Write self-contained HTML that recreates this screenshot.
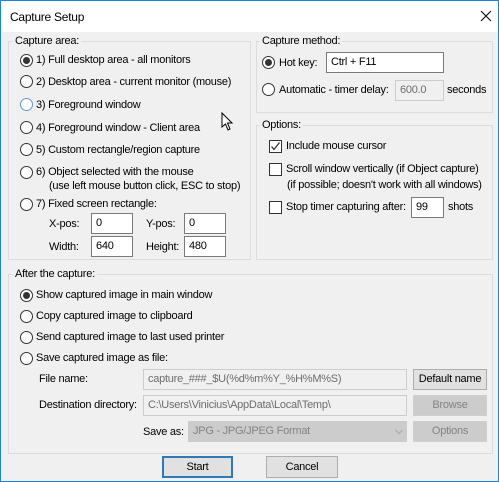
<!DOCTYPE html>
<html><head><meta charset="utf-8"><style>
*{box-sizing:border-box;margin:0;padding:0}
body{width:499px;height:482px;overflow:hidden;font-family:"Liberation Sans",sans-serif;font-size:11px;color:#000;letter-spacing:-0.25px}
#win{position:absolute;left:0;top:0;width:499px;height:482px;border:1px solid #1883d7;background:#f0f0f0}
#title{position:absolute;left:0;top:0;width:497px;height:31px;background:#fff}
.a{position:absolute;white-space:nowrap;line-height:14px}
.g{position:absolute;border:1px solid #dcdcdc}
.gl{position:absolute;background:#f0f0f0;padding:0 2px;line-height:14px}
.r{position:absolute;width:13px;height:13px;border:1px solid #333;border-radius:50%;background:#fff}
.r.on::after{content:"";position:absolute;left:2px;top:2px;width:7px;height:7px;border-radius:50%;background:#333}
.r.blue{border-color:#5b9bd5}
.c{position:absolute;width:13px;height:13px;border:1px solid #333;background:#fff}
.i{position:absolute;border:1px solid #7a7a7a;background:#fff;padding:2px 4px;line-height:14px;height:21px}
.i.d{border-color:#ccc;background:#f0f0f0;color:#6d6d6d}
.b{position:absolute;border:1px solid #adadad;background:#e1e1e1;text-align:center;line-height:19px}
.b.d{border-color:#cfcfcf;background:#cccccc;color:#838383}
</style></head><body><div id="win">
<div id="title"></div>
<div class="a" style="left:9px;top:9px;font-size:12px">Capture Setup</div>
<svg style="position:absolute;left:479px;top:9px" width="12" height="12"><path d="M1 1L11 11M11 1L1 11" stroke="#000" stroke-width="1"/></svg>

<div class="g" style="left:7px;top:40px;width:243px;height:219px"></div>
<div class="gl" style="left:12px;top:33px">Capture area:</div>
<div class="r on" style="left:19px;top:53px"></div><div class="a" style="left:35px;top:52px">1) Full desktop area - all monitors</div>
<div class="r" style="left:19px;top:74px"></div><div class="a" style="left:35px;top:74px">2) Desktop area - current monitor (mouse)</div>
<div class="r blue" style="left:19px;top:97px"></div><div class="a" style="left:35px;top:97px">3) Foreground window</div>
<div class="r" style="left:19px;top:120px"></div><div class="a" style="left:35px;top:120px">4) Foreground window - Client area</div>
<div class="r" style="left:19px;top:142px"></div><div class="a" style="left:35px;top:142px">5) Custom rectangle/region capture</div>
<div class="r" style="left:19px;top:165px"></div><div class="a" style="left:35px;top:164px">6) Object selected with the mouse</div>
<div class="a" style="left:48px;top:178px">(use left mouse button click, ESC to stop)</div>
<div class="r" style="left:19px;top:197px"></div><div class="a" style="left:35px;top:196px">7) Fixed screen rectangle:</div>
<div class="a" style="left:48px;top:216px">X-pos:</div><div class="i" style="left:90px;top:212px;width:42px">0</div>
<div class="a" style="left:145px;top:216px">Y-pos:</div><div class="i" style="left:183px;top:212px;width:42px">0</div>
<div class="a" style="left:48px;top:239px">Width:</div><div class="i" style="left:90px;top:235px;width:42px">640</div>
<div class="a" style="left:145px;top:239px">Height:</div><div class="i" style="left:183px;top:235px;width:42px">480</div>
<svg style="position:absolute;left:220px;top:111px" width="14" height="20"><path d="M1 1L1 15L4.5 12L7 18L9 17L6.5 11L11 11Z" fill="#fff" stroke="#000" stroke-width="1"/></svg>

<div class="g" style="left:255px;top:40px;width:237px;height:72px"></div>
<div class="gl" style="left:259px;top:33px">Capture method:</div>
<div class="r on" style="left:261px;top:55px"></div><div class="a" style="left:278px;top:55px">Hot key:</div>
<div class="i" style="left:325px;top:51px;width:118px">Ctrl + F11</div>
<div class="r" style="left:261px;top:82px"></div><div class="a" style="left:278px;top:82px">Automatic - timer delay:</div>
<div class="i d" style="left:394px;top:79px;width:49px">600.0</div><div class="a" style="left:446px;top:82px">seconds</div>

<div class="g" style="left:255px;top:124px;width:237px;height:135px"></div>
<div class="gl" style="left:259px;top:117px">Options:</div>
<div class="c" style="left:268px;top:139px"></div>
<svg style="position:absolute;left:268px;top:139px" width="13" height="13"><path d="M2.5 6.5L5 9.5L10.5 2.5" fill="none" stroke="#333" stroke-width="1.3"/></svg>
<div class="a" style="left:285px;top:138px">Include mouse cursor</div>
<div class="c" style="left:268px;top:162px"></div><div class="a" style="left:285px;top:161px">Scroll window vertically (if Object capture)</div>
<div class="a" style="left:286px;top:177px">(if possible; doesn't work with all windows)</div>
<div class="c" style="left:268px;top:200px"></div><div class="a" style="left:285px;top:199px">Stop timer capturing after:</div>
<div class="i" style="left:410px;top:196px;width:33px">99</div><div class="a" style="left:447px;top:199px">shots</div>

<div class="g" style="left:7px;top:273px;width:485px;height:180px"></div>
<div class="gl" style="left:12px;top:266px">After the capture:</div>
<div class="r on" style="left:19px;top:288px"></div><div class="a" style="left:35px;top:287px">Show captured image in main window</div>
<div class="r" style="left:19px;top:309px"></div><div class="a" style="left:35px;top:308px">Copy captured image to clipboard</div>
<div class="r" style="left:19px;top:330px"></div><div class="a" style="left:35px;top:329px">Send captured image to last used printer</div>
<div class="r" style="left:19px;top:351px"></div><div class="a" style="left:35px;top:350px">Save captured image as file:</div>
<div class="a" style="left:38px;top:371px">File name:</div>
<div class="i d" style="left:142px;top:368px;width:264px">capture_###_$U(%d%m%Y_%H%M%S)</div>
<div class="b" style="left:412px;top:368px;width:74px;height:21px">Default name</div>
<div class="a" style="left:38px;top:397px">Destination directory:</div>
<div class="i d" style="left:142px;top:394px;width:264px">C:\Users\Vinicius\AppData\Local\Temp\</div>
<div class="b d" style="left:412px;top:394px;width:74px;height:21px">Browse</div>
<div class="a" style="left:142px;top:424px">Save as:</div>
<div class="i d" style="left:187px;top:420px;width:219px;border-color:#ccc;background:#ccc;color:#838383">JPG - JPG/JPEG Format</div>
<svg style="position:absolute;left:394px;top:428px" width="8" height="6"><path d="M0.5 1L4 4.5L7.5 1" fill="none" stroke="#a8a8a8"/></svg>
<div class="b d" style="left:412px;top:420px;width:74px;height:21px">Options</div>

<div class="b" style="left:161px;top:455px;width:71px;height:22px;border:2px solid #2f79b8;line-height:18px">Start</div>
<div class="b" style="left:265px;top:455px;width:72px;height:22px;line-height:20px">Cancel</div>
</div></body></html>
